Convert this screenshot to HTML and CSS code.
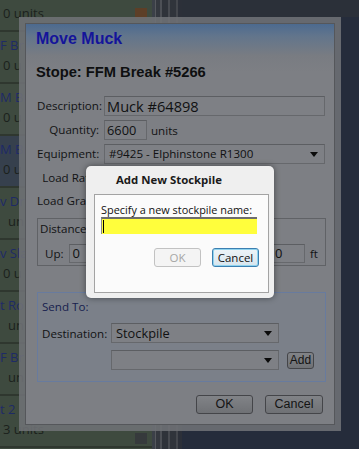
FILE: index.html
```html
<!DOCTYPE html>
<html>
<head>
<meta charset="utf-8">
<link rel="stylesheet" href="styles.css">
</head>
<body>
<div class="page">
  <div class="list">
    <div class="item"><div class="l1"></div><div class="l2">0 units</div><span class="sq brown"></span></div>
    <div class="item"><div class="l1">F Br</div><div class="l2">0 u</div></div>
    <div class="item"><div class="l1">M Br</div><div class="l2">0 u</div></div>
    <div class="item sel"><div class="l1">M Br</div><div class="l2">0 u</div></div>
    <div class="item"><div class="l1">v Dri</div><div class="l2 in">un</div></div>
    <div class="item"><div class="l1">v Sla</div><div class="l2">0 u</div></div>
    <div class="item"><div class="l1">t Ro</div><div class="l2 in">un</div></div>
    <div class="item"><div class="l1">F Br</div><div class="l2 in">un</div></div>
    <div class="item"><div class="l1">t 2</div><div class="l2">3 units</div><span class="sq dark"></span></div>
  </div>
  <div class="scroll"></div>
  <div class="rest"></div>
</div>

<div class="dialog">
  <div class="dlg-inner">
    <div class="dlg-title">Move Muck</div>
    <div class="dlg-head">Stope: FFM Break #5266</div>
    <div class="form">
      <label class="lbl">Description:</label>
      <div class="field"><div class="input wide">Muck #64898</div></div>
      <label class="lbl">Quantity:</label>
      <div class="field"><div class="input qty">6600</div><span class="unit">units</span></div>
      <label class="lbl">Equipment:</label>
      <div class="field"><div class="select wide small">#9425 - Elphinstone R1300<span class="arrow"></span></div></div>
      <label class="lbl tall">Load Rate:</label>
      <div class="field tall"></div>
      <label class="lbl tall">Load Grade:</label>
      <div class="field tall"></div>
    </div>
    <div class="fs distance">
      <div class="fs-title">Distance:</div>
      <div class="dist-row">
        <span class="dl">Up:</span><div class="input dist up">0</div>
        <div class="input dist right">0</div><span class="unit">ft</span>
      </div>
    </div>
    <div class="fs sendto">
      <div class="fs-title blue">Send To:</div>
      <div class="send-row first">
        <span class="sl">Destination:</span>
        <div class="select dest">Stockpile<span class="arrow"></span></div>
      </div>
      <div class="send-row">
        <span class="sl"></span>
        <div class="select dest"><span class="arrow"></span></div>
        <button class="btn add">Add</button>
      </div>
    </div>
    <div class="actions">
      <button class="btn main ok">OK</button>
      <button class="btn main cancel">Cancel</button>
    </div>
  </div>
</div>

<div class="modal">
  <div class="modal-title">Add New Stockpile</div>
  <div class="modal-panel">
    <div class="prompt">Specify a new stockpile name:</div>
    <div class="yinput"><span class="caret"></span></div>
    <div class="modal-actions">
      <button class="mbtn disabled">OK</button>
      <button class="mbtn focus">Cancel</button>
    </div>
  </div>
</div>
</body>
</html>
```
FILE: styles.css
```css
* { box-sizing: border-box; }
html, body { margin: 0; padding: 0; }
body {
  width: 359px;
  height: 449px;
  overflow: hidden;
  position: relative;
  background: #252c3a;
  font-family: "Open Sans", "Liberation Sans", sans-serif;
}
.page {
  display: flex;
  height: 449px;
}
.list {
  width: 152px;
  margin-top: -20px;
  background: #3e4a3f;
  flex: none;
}
.item {
  position: relative;
  height: 52px;
  padding-top: 3px;
  border-bottom: 2px solid #2f372f;
  font-size: 13px;
  line-height: 20px;
  white-space: nowrap;
}
.item.sel { background: #36404d; }
.l1 { color: #1e2a66; height: 20px; }
.l2 { color: #1b211c; padding-left: 3px; }
.l2.in { padding-left: 8px; }
.sq {
  position: absolute;
  left: 135px;
  top: 28px;
  width: 12px;
  height: 11px;
}
.sq.brown { background: #5d3f27; }
.sq.dark { top: 37px; background: #363a3c; }
.scroll {
  width: 30px;
  flex: none;
  background: linear-gradient(90deg, #3b4048 0 3px, #55585d 3px 4px, #34383f 4px 8px, #4d5056 8px 10px, #2f333a 10px 16px, #484b51 16px 18px, #30343b 18px 24px, #44474d 24px 26px, #2c3039 26px);
}
.rest {
  flex: 1;
  background: linear-gradient(#2b3039 0 17px, #252c3b 17px);
}

/* main dialog */
.dialog {
  position: absolute;
  left: 19px;
  top: 17px;
  width: 322px;
  height: 414px;
  border: 6px solid rgba(112, 114, 118, 0.88);
}
.dlg-inner {
  height: 100%;
  border: 1px solid #55575b;
  background: linear-gradient(#4c6a8f 0, #62758c 12px, #797c82 32px, #7d7f84 48px, #7d7f84 100%);
  padding: 6px 10px 0 10px;
  color: #121314;
  font-size: 11.5px;
}
.dlg-title {
  font-family: "Liberation Sans", Arial, sans-serif;
  font-weight: bold;
  font-size: 16px;
  line-height: 18px;
  color: #14149a;
}
.dlg-head {
  font-family: "Liberation Sans", Arial, sans-serif;
  font-weight: bold;
  font-size: 14.7px;
  line-height: 18px;
  margin-top: 15px;
  color: #0e0f10;
}
.form {
  display: grid;
  grid-template-columns: 62px 1fr;
  column-gap: 5px;
  row-gap: 4px;
  margin-top: 15px;
  margin-left: 1px;
}
.lbl {
  text-align: right;
  line-height: 20px;
  white-space: nowrap;
  font-size: 11.6px;
}
.lbl.tall, .field.tall { height: 19px; line-height: 19px; }
.field {
  display: flex;
  align-items: center;
  gap: 4px;
  height: 20px;
}
.input, .select {
  height: 20px;
  border: 1px solid #66686c;
  border-top-color: #5c5e62;
  background: #7e8085;
  color: #101112;
  font-size: 14.6px;
  line-height: 18px;
  padding-left: 2px;
  white-space: nowrap;
  overflow: hidden;
  position: relative;
}
.input.wide, .select.wide { width: 221px; }
.input.qty { width: 43px; font-size: 12.8px; }
.select.small { font-size: 11.6px; padding-left: 4px; }
.arrow {
  position: absolute;
  right: 6px;
  top: 7px;
  width: 0;
  height: 0;
  border-left: 4px solid transparent;
  border-right: 4px solid transparent;
  border-top: 5px solid #0b0b0b;
}
.unit { font-size: 11.6px; }

.fs {
  border: 1px solid #606266;
  margin-left: 1px;
  width: 289px;
}
.distance {
  margin-top: 8px;
  height: 48px;
  padding: 2px 0 0 2px;
}
.fs-title { font-size: 11.6px; line-height: 16px; }
.dist-row {
  display: flex;
  align-items: center;
  height: 20px;
  margin-top: 6px;
  padding-left: 5px;
  gap: 5px;
}
.dl { font-size: 11.6px; }
.input.dist { height: 19px; font-size: 13px; line-height: 16px; padding-left: 3px; }
.input.up { width: 60px; }
.input.right { width: 34px; margin-left: auto; }
.dist-row .unit { margin-right: 7px; }

.sendto {
  margin-top: 26px;
  height: 90px;
  border-color: #687b9e;
  background: #7b8089;
  padding: 4px 0 0 4px;
}
.fs-title.blue { color: #17204e; line-height: 16px; margin-top: 2px; }
.send-row {
  display: flex;
  align-items: center;
  gap: 8px;
  height: 20px;
  margin-top: 7px;
}
.send-row.first { margin-top: 8px; }
.sl { width: 61px; font-size: 11.6px; flex: none; white-space: nowrap; }
.select.dest { width: 168px; font-size: 12.8px; padding-left: 4px; }
.btn {
  font-family: "Liberation Sans", Arial, sans-serif;
  color: #141414;
  border: 1px solid #444549;
  border-radius: 3px;
  background: linear-gradient(#818387, #6f7175);
  padding: 0;
}
.btn.add { width: 27px; height: 17px; font-size: 12px; line-height: 15px; }
.actions {
  display: flex;
  justify-content: flex-end;
  gap: 12px;
  margin-top: 13px;
  padding-right: 1px;
}
.btn.main { height: 19px; font-size: 12.5px; line-height: 17px; }
.btn.ok { width: 57px; }
.btn.cancel { width: 58px; }

/* modal */
.modal {
  position: absolute;
  left: 86px;
  top: 166px;
  width: 188px;
  height: 132px;
  border-radius: 5px;
  background: #efefef;
  box-shadow: 0 0 6px rgba(0, 0, 0, 0.45);
  padding: 0 5px 5px 8px;
  display: flex;
  flex-direction: column;
}
.modal-title {
  height: 28px;
  line-height: 28px;
  padding-left: 22px;
  font-weight: bold;
  font-size: 11.4px;
  color: #1a1a1a;
}
.modal-panel {
  flex: 1;
  border: 1px solid #a3a3a3;
  background: #fbfbfb;
  padding: 7px 0 0 6px;
}
.prompt {
  font-size: 10.9px;
  line-height: 16px;
  color: #111;
}
.yinput {
  width: 156px;
  height: 17px;
  background: #fffe3c;
  border-top: 2px solid #6d6d6d;
  border-left: 1px solid #8a8a8a;
  position: relative;
  margin-top: -1px;
}
.caret {
  position: absolute;
  left: 1px;
  top: 1px;
  width: 1px;
  height: 13px;
  background: #000;
}
.modal-actions {
  display: flex;
  gap: 11px;
  justify-content: flex-end;
  padding-right: 9px;
  margin-top: 14px;
}
.mbtn {
  width: 47px;
  height: 19px;
  border-radius: 3px;
  font-family: "Open Sans", sans-serif;
  font-size: 11.5px;
  line-height: 16px;
  padding: 0;
}
.mbtn.disabled {
  border: 1px solid #c2c2c2;
  background: #f4f4f4;
  color: #a6a6a6;
}
.mbtn.focus {
  border: 1px solid #3c7fb1;
  box-shadow: inset 0 0 0 1px #8fd3ee;
  background: linear-gradient(#edf4f8, #d7e5ee);
  color: #111;
}
```
